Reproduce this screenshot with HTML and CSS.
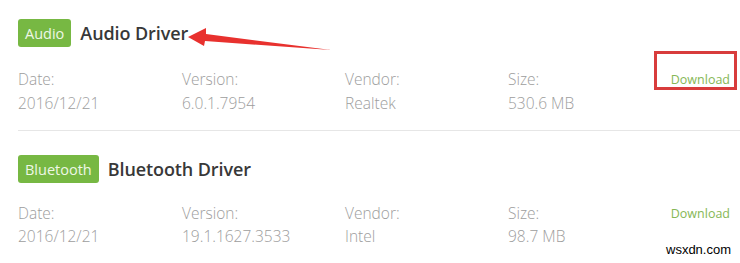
FILE: index.html
```html
<!DOCTYPE html>
<html>
<head>
<meta charset="utf-8">
<link rel="stylesheet" href="styles.css">
</head>
<body>
<div class="page">
  <section class="driver">
    <div class="head">
      <span class="badge">Audio</span>
      <h2 class="title">Audio Driver</h2>
    </div>
    <div class="meta">
      <span class="lbl">Date:</span>
      <span class="lbl">Version:</span>
      <span class="lbl">Vendor:</span>
      <span class="lbl">Size:</span>
      <a class="dl">Download</a>
      <span class="val">2016/12/21</span>
      <span class="val">6.0.1.7954</span>
      <span class="val">Realtek</span>
      <span class="val">530.6 MB</span>
      <span></span>
    </div>
  </section>
  <section class="driver second">
    <div class="head">
      <span class="badge">Bluetooth</span>
      <h2 class="title">Bluetooth Driver</h2>
    </div>
    <div class="meta">
      <span class="lbl">Date:</span>
      <span class="lbl">Version:</span>
      <span class="lbl">Vendor:</span>
      <span class="lbl">Size:</span>
      <a class="dl">Download</a>
      <span class="val">2016/12/21</span>
      <span class="val">19.1.1627.3533</span>
      <span class="val">Intel</span>
      <span class="val">98.7 MB</span>
      <span></span>
    </div>
  </section>

  <svg class="arrow" width="740" height="263" viewBox="0 0 740 263">
    <polygon points="188,37 206,28 206,34 331,50 205,41 204,46" fill="#e8312e"/>
  </svg>
  <div class="hl-box"></div>
  <div class="watermark">wsxdn.com</div>
</div>
</body>
</html>
```

FILE: styles.css
```css
html, body {
  margin: 0;
  padding: 0;
  background: #fff;
}
.page {
  position: relative;
  width: 740px;
  height: 263px;
  overflow: hidden;
  font-family: "Open Sans", "Noto Sans", sans-serif;
}
.driver {
  margin-left: 18px;
  padding-top: 19px;
  padding-bottom: 16px;
  border-bottom: 1px solid #e6e6e6;
}
.driver.second {
  padding-top: 24px;
  border-bottom: none;
}
.second .meta {
  margin-top: 18px;
  grid-template-rows: 24px 22px;
}
.head {
  display: flex;
  align-items: center;
  gap: 9px;
  height: 28px;
}
.badge {
  display: inline-flex;
  align-items: center;
  height: 28px;
  padding: 0 7px;
  background: #77b843;
  color: #eef7e6;
  font-size: 14.5px;
  border-radius: 3px;
  box-sizing: border-box;
}
.title {
  margin: 0;
  font-size: 18px;
  font-weight: 600;
  color: #383838;
  letter-spacing: -0.1px;
}
.meta {
  margin-top: 20px;
  margin-right: 10px;
  display: grid;
  grid-template-columns: 164px 163px 163px 1fr auto;
  grid-template-rows: 24px 23px;
  align-items: center;
}
.lbl, .val {
  font-size: 15.5px;
  font-weight: 300;
  color: #9d9d9d;
}
.dl {
  font-size: 12.5px;
  color: #86b756;
  text-align: right;
}
.arrow {
  position: absolute;
  left: 0;
  top: 0;
  pointer-events: none;
}
.hl-box {
  position: absolute;
  left: 654px;
  top: 51px;
  width: 83px;
  height: 39px;
  box-sizing: border-box;
  border: 3px solid #d83c3c;
}
.watermark {
  position: absolute;
  left: 666px;
  top: 242px;
  font-family: "Liberation Sans", Arial, sans-serif;
  font-size: 13px;
  color: #000;
}
```
